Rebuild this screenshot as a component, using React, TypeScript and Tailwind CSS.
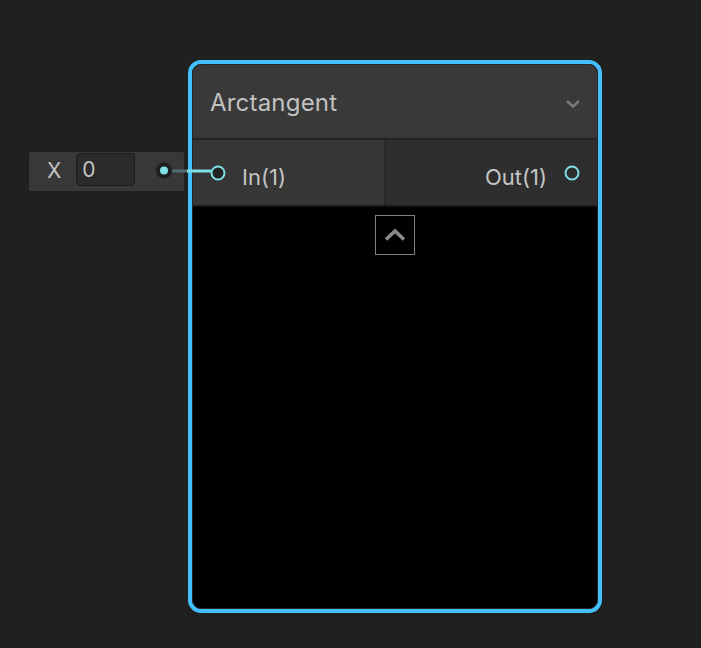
function PortRing({ fill }: { fill: string }) {
  return (
    <svg width="18" height="18" viewBox="0 0 18 18" className="shrink-0">
      <circle cx="9" cy="9" r="6.5" fill={fill} stroke="#7fe0e6" strokeWidth="2" />
    </svg>
  )
}

function PropertyField() {
  return (
    <div className="absolute left-[29px] top-[152px] w-[155px] h-[39px] bg-[#383838] rounded-[2px] flex items-start">
      <span className="ml-[18px] mt-[6px] text-[21px] leading-[26px] text-[#c4c4c4]">X</span>
      <div className="ml-[15px] mt-[1px] w-[59px] h-[33px] bg-[#2a2a2a] border border-[#1c1c1c] rounded-[4px] flex items-center pl-[5px] text-[21px] leading-[26px] text-[#c4c4c4]">
        0
      </div>
    </div>
  )
}

function Wire() {
  return (
    <svg className="absolute left-0 top-0 pointer-events-none" width="701" height="648">
      <circle cx="164" cy="170.5" r="8" fill="#1e1e1e" />
      <circle cx="164" cy="170.5" r="4" fill="#7fe0e6" />
      <rect x="172" y="169.5" width="15" height="3" fill="#4e6f72" />
      <rect x="187" y="169.5" width="24" height="3" fill="#7fe0e6" />
    </svg>
  )
}

function Node() {
  return (
    <div className="absolute left-[188px] top-[60px] w-[414px] h-[553px] rounded-[13px] border-4 border-[#44c0ff] bg-[#232323]">
      <div className="h-full rounded-[9px] overflow-hidden border border-[#262626] flex flex-col">
        <div className="h-[73px] shrink-0 bg-[#393939] flex items-center justify-between pl-[17px] pr-[16px]">
          <span className="text-[24px] leading-[30px] text-[#c2c2c2] tracking-[0.2px] mt-[2px]">Arctangent</span>
          <svg width="16" height="10" viewBox="0 0 16 10" className="mt-[5px]">
            <polyline points="2,2 8,7.5 14,2" fill="none" stroke="#7a7a7a" strokeWidth="2.5" />
          </svg>
        </div>
        <div className="h-[2px] shrink-0 bg-[#232323]" />
        <div className="h-[65px] shrink-0 flex">
          <div className="w-[191px] bg-[#363636] flex items-center pl-[16px] gap-[15px]">
            <PortRing fill="#232323" />
            <span className="text-[22px] leading-[28px] text-[#c4c4c4] mt-[8px]">In(1)</span>
          </div>
          <div className="w-[2px] bg-[#282828]" />
          <div className="flex-1 bg-[#2e2e2e] flex items-center justify-end pr-[16px] gap-[16px]">
            <span className="text-[22px] leading-[28px] text-[#c4c4c4] mt-[8px]">Out(1)</span>
            <PortRing fill="#2e2e2e" />
          </div>
        </div>
        <div className="h-[2px] shrink-0 bg-[#1a1a1a]" />
        <div className="flex-1 bg-black flex justify-center pt-[8px]">
          <div className="w-[40px] h-[40px] border border-[#7f7f7f] flex items-center justify-center">
            <svg width="24" height="16" viewBox="0 0 24 16">
              <polyline points="3,12.5 12,4 21,12.5" fill="none" stroke="#8a8a8a" strokeWidth="3.5" />
            </svg>
          </div>
        </div>
      </div>
    </div>
  )
}

export default function App() {
  return (
    <div className="relative w-[701px] h-[648px] bg-[#202020] overflow-hidden font-['Inter',sans-serif]">
      <PropertyField />
      <Node />
      <Wire />
    </div>
  )
}
